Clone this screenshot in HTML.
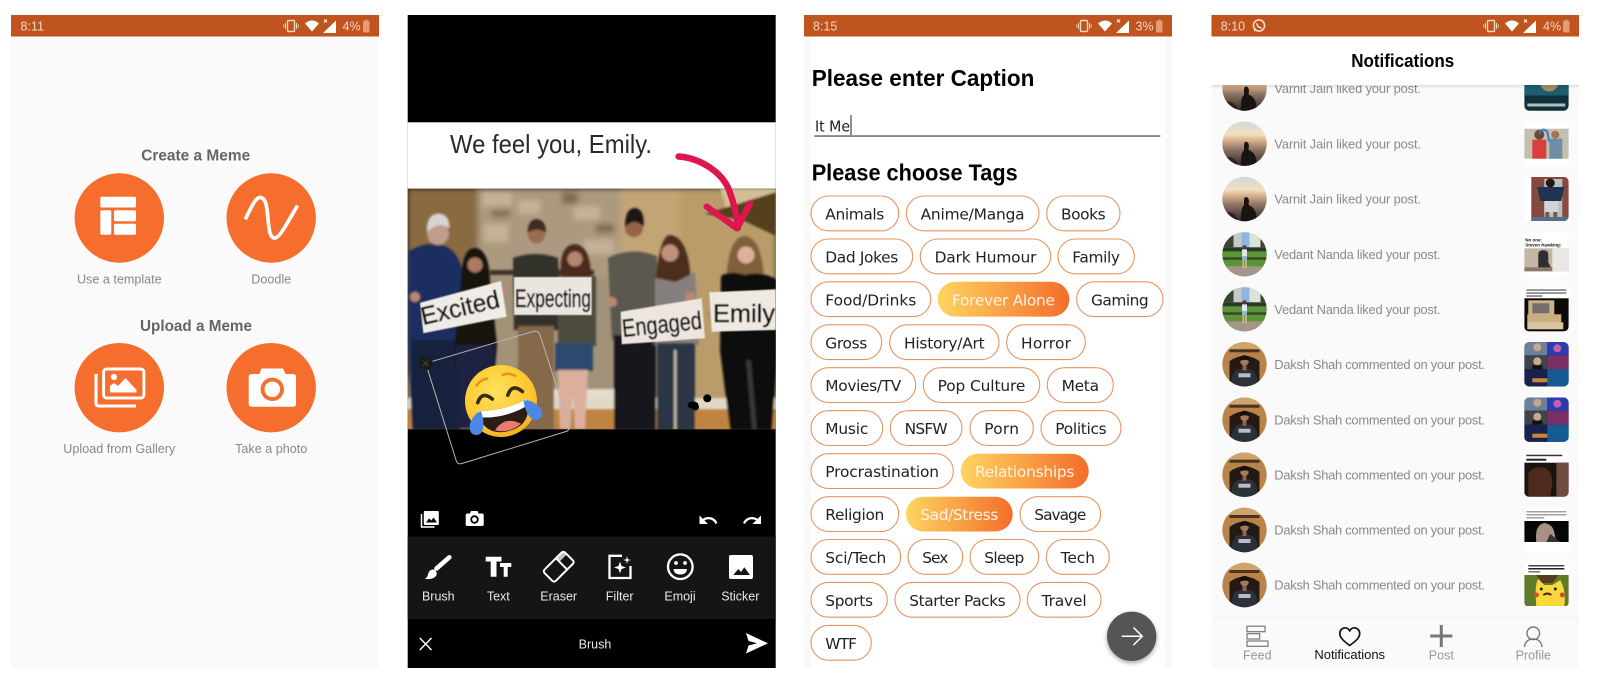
<!DOCTYPE html>
<html><head><meta charset="utf-8"><title>Meme app screens</title>
<style>
html,body{margin:0;padding:0;background:#fff;width:1600px;height:689px;overflow:hidden}
svg{position:absolute;left:0;top:0;display:block}
text{font-family:"Liberation Sans",sans-serif}
.st{font-size:12.5px;fill:#f1d6c6}
.h1{font-size:16px;font-weight:bold;fill:#666;text-anchor:middle}
.lb{font-size:12.6px;fill:#888;text-anchor:middle}
.tl{font-size:12.5px;fill:#e8e8e8;text-anchor:middle}
.hd{font-size:23.5px;font-weight:bold;fill:#000}
.c{fill:#fff;stroke:#e8935e;stroke-width:1.1}
.t{font-family:"DejaVu Sans",sans-serif;font-size:15.4px;fill:#222}
.w{font-family:"DejaVu Sans",sans-serif;font-size:15.4px;fill:#fff3e6}
.n{font-size:12.9px;fill:#8a8a8a}
.nv{font-size:12.5px;fill:#999;text-anchor:middle}
.sg{font-size:25px;fill:#17130f;stroke:#17130f;stroke-width:.5}
</style></head>
<body>
<svg width="1600" height="689" viewBox="0 0 1600 689" xmlns="http://www.w3.org/2000/svg">
<defs>
<linearGradient id="gr" x1="0" x2="1" y1="0" y2="0"><stop offset="0" stop-color="#fdd560"/><stop offset="1" stop-color="#f46d2b"/></linearGradient>
<linearGradient id="sky" x1="0" x2="0" y1="0" y2="1"><stop offset="0" stop-color="#cfd8dc"/><stop offset=".3" stop-color="#f2dfbc"/><stop offset=".45" stop-color="#d3a985"/><stop offset=".62" stop-color="#8e7464"/><stop offset="1" stop-color="#2a2222"/></linearGradient>
<linearGradient id="hsd" x1="0" x2="0" y1="0" y2="1"><stop offset="0" stop-color="#000" stop-opacity=".1"/><stop offset="1" stop-color="#000" stop-opacity="0"/></linearGradient>
<radialGradient id="face" cx=".45" cy=".35" r=".75"><stop offset="0" stop-color="#ffe25a"/><stop offset=".7" stop-color="#fcc42c"/><stop offset="1" stop-color="#f39a1e"/></radialGradient>
<filter id="b1" x="-5%" y="-5%" width="110%" height="110%"><feGaussianBlur stdDeviation="1.1"/></filter>
<filter id="b3" x="-5%" y="-5%" width="110%" height="110%"><feGaussianBlur stdDeviation="3"/></filter>
<filter id="b2"><feGaussianBlur stdDeviation=".45"/></filter>
<filter id="sh" x="-30%" y="-30%" width="160%" height="170%"><feDropShadow dx="0" dy="2" stdDeviation="2.5" flood-color="#000" flood-opacity=".35"/></filter>
<clipPath id="ph"><rect x="407.700" y="188.700" width="368" height="240.600"/></clipPath>
<clipPath id="av"><circle r="22.200"/></clipPath>
<clipPath id="th"><rect x="0" y="-22.200" width="44.300" height="44.400" rx="5"/></clipPath>
<clipPath id="lst"><rect x="1211" y="85" width="368" height="532"/></clipPath>

<g id="status">
<rect x="276.500" y="5.500" width="7" height="11" rx="1" fill="none" stroke="#f1d6c6" stroke-width="1.400"/>
<path d="M274.500 8v6M272.800 9.500v3M285.500 8v6M287.200 9.500v3" stroke="#f1d6c6" stroke-width="1"/>
<path d="M294 8.500Q301 2.500 308 8.500L301 16.500Z" fill="#fff"/>
<path d="M325 5.500V18H312Z" fill="#fff"/>
<path d="M313 4.500l3 3M316 4.500l-3 3" stroke="#fff" stroke-width=".9"/>
<rect x="352" y="6" width="6.500" height="11.500" rx="1" fill="#e59b78"/>
<rect x="353.800" y="4.800" width="3" height="1.500" fill="#e59b78"/>
</g>

<g id="a1"><g clip-path="url(#av)"><rect x="-23" y="-23" width="46" height="46" fill="url(#sky)"/>
<path d="M-23 14Q-10 10 -6 23H-23Z" fill="#1e1a1a" opacity=".8"/>
<path d="M-4 23L-3 11Q-2 7.500 -.5 6.500V2Q-.5 -2 1.500 -2Q4 -2 4.500 2L4 6Q9 8 11 13L13 23Z" fill="#191412"/></g></g>

<g id="a2"><g clip-path="url(#av)"><rect x="-23" y="-23" width="46" height="46" fill="#8fb6dc"/>
<rect x="-12" y="-22" width="9" height="15" fill="#c4c8c6"/><rect x="5" y="-21" width="11" height="16" fill="#e0e0da"/>
<path d="M-23 -22H-11V-7H-23ZM16 -20H24V-7H16Z" fill="#39452f"/>
<rect x="-23" y="-7" width="46" height="5" fill="#2b3823"/>
<rect x="-23" y="-3" width="46" height="16" fill="#5e9438"/><rect x="-23" y="3" width="46" height="2.500" fill="#26331b" opacity=".75"/>
<rect x="-23" y="12" width="46" height="12" fill="#a39588"/>
<rect x="-2.500" y="-5" width="5" height="7" fill="#dfe8ee"/><rect x="-2.500" y="2" width="5" height="4" fill="#8fb3c9"/><rect x="-2" y="6" width="1.700" height="8" fill="#d8b096"/><rect x=".5" y="6" width="1.700" height="8" fill="#d8b096"/><circle cy="-7" r="2" fill="#5a3d2c"/></g></g>

<g id="a3"><g clip-path="url(#av)"><rect x="-23" y="-23" width="46" height="46" fill="#b8844a"/>
<rect x="-23" y="-23" width="46" height="8" fill="#cfa46c"/>
<rect x="-15" y="-15" width="30" height="3" fill="#4a3420"/>
<path d="M-15 23V-3Q0 -14 15 -3V23Z" fill="#241a13"/>
<path d="M-14 23Q-13 7 -6 5H6Q13 7 14 23Z" fill="#2b3039"/>
<rect x="-6" y="9" width="12" height="4" fill="#b8bcc4"/>
<rect x="-2" y="1" width="4" height="5" fill="#8d654a"/>
<circle cy="-3" r="4.300" fill="#a4785a"/><path d="M-5 -3Q-5 -9 0 -9Q5 -9 5 -3Q1 -6 -5 -3Z" fill="#15100c"/></g></g>

<g id="th0"><g clip-path="url(#th)"><rect y="-23" width="45" height="46" fill="#0e3038"/><rect y="-23" width="45" height="30" fill="#1f6a7c" opacity=".8"/><circle cx="25" cy="-6" r="9" fill="#a48a62"/><rect x="3" y="15" width="38" height="3" fill="#aebfc2"/></g></g>
<g id="th1"><g clip-path="url(#th)"><rect y="-23" width="45" height="46" fill="#fff"/><rect y="-15" width="45" height="30" fill="#c3c0ae"/><rect x="8" y="-4" width="14" height="19" fill="#d8403c"/><circle cx="15" cy="-9" r="5" fill="#6d4a35"/><path d="M15 -10Q18 -17 23 -12L25 -2" stroke="#3a78c8" stroke-width="2" fill="none"/><rect x="25" y="-5" width="13" height="20" fill="#6e8ea8"/><circle cx="31" cy="-9" r="4" fill="#a17553"/></g></g>
<g id="th2"><g clip-path="url(#th)"><rect y="-23" width="45" height="46" fill="#fff"/><rect x="7" y="-22" width="38" height="44" fill="#86493f"/><rect x="20" y="-20" width="18" height="38" fill="#b9c0bd"/><path d="M13 -12H40L37 2H16Z" fill="#1f3354"/><circle cx="26" cy="-16" r="4.500" fill="#231715"/><rect x="20" y="2" width="14" height="12" fill="#d2d2d8"/><rect x="21" y="13" width="4" height="6" fill="#7a584a"/><rect x="29" y="13" width="4" height="6" fill="#7a584a"/><rect x="7" y="18" width="38" height="4" fill="#5a6d8a"/></g></g>
<g id="th3"><g clip-path="url(#th)"><rect y="-23" width="45" height="46" fill="#fff"/><text x="1" y="-13" font-size="4.500" font-weight="bold" fill="#111">No one:</text><text x="1" y="-8" font-size="4.500" font-weight="bold" fill="#111">Steven Hawking:</text><rect y="-6" width="45" height="23" fill="#c5b6a4"/><rect x="28" y="-6" width="17" height="23" fill="#e8e7e3"/><path d="M14 12V0Q14 -4 19 -4T24 0V8L27 14H14Z" fill="#2c2f33"/><rect y="13" width="28" height="4" fill="#8a7a68"/></g></g>
<g id="th4"><g clip-path="url(#th)"><rect y="-23" width="45" height="46" fill="#fff"/><rect x="2" y="-20" width="40" height="1.500" fill="#777"/><rect x="2" y="-17" width="40" height="1.500" fill="#777"/><rect x="2" y="-14" width="16" height="1.500" fill="#777"/><rect y="-11" width="45" height="33" fill="#0b0a08"/><rect x="4" y="-9" width="26" height="15" fill="#c9b188"/><rect x="8" y="-6" width="17" height="10" fill="#71706a"/><rect x="3" y="5" width="34" height="9" fill="#c9ae82"/><rect x="3" y="13" width="36" height="7" fill="#d9c6a0"/></g></g>
<g id="th5"><g clip-path="url(#th)"><rect y="-23" width="45" height="46" fill="#16203a"/><rect y="-23" width="23" height="14" fill="#6c8098"/><circle cx="13" cy="-17" r="4" fill="#c7a68e"/><rect x="23" y="-23" width="22" height="14" fill="#2a3cae"/><circle cx="33" cy="-16" r="4" fill="#c060b0"/><rect y="-9" width="23" height="14" fill="#3f434b"/><circle cx="13" cy="-3" r="4" fill="#caa88e"/><rect x="8" y="1" width="10" height="4" fill="#111"/><rect x="23" y="-9" width="22" height="14" fill="#7a2f66"/><rect y="5" width="23" height="17" fill="#18224e"/><rect x="8" y="14" width="16" height="4" fill="#c8873c"/><rect x="23" y="5" width="22" height="17" fill="#155a92"/></g></g>
<g id="th6"><g clip-path="url(#th)"><rect y="-23" width="45" height="46" fill="#fff"/><rect x="2" y="-20" width="36" height="1.500" fill="#333"/><rect x="2" y="-16" width="20" height="2" fill="#222"/><rect y="-12" width="45" height="34" fill="#1a1310"/><path d="M4 22V-2Q10 -9 20 -7Q28 -4 28 8L26 22Z" fill="#4d2a1c"/><rect x="32" y="-12" width="13" height="34" fill="#6e4c3e"/></g></g>
<g id="th7"><g clip-path="url(#th)"><rect y="-23" width="45" height="46" fill="#fff"/><rect x="2" y="-19" width="40" height="1.500" fill="#a0a0a0"/><rect x="2" y="-16" width="40" height="1.500" fill="#a0a0a0"/><rect x="2" y="-13" width="18" height="1.500" fill="#a0a0a0"/><rect y="-9" width="45" height="21" fill="#060606"/><path d="M12 12Q10 -5 20 -7Q28 -6 30 2L32 12Z" fill="#a89082"/><path d="M22 12L26 4L36 12Z" fill="#333"/></g></g>
<g id="th8"><g clip-path="url(#th)"><rect y="-23" width="45" height="46" fill="#fff"/><rect x="4" y="-20" width="36" height="1.500" fill="#444"/><rect x="4" y="-17" width="36" height="1.500" fill="#222"/><rect x="4" y="-14" width="12" height="1.500" fill="#777"/><rect y="-10" width="45" height="31" fill="#5e7a2a"/><path d="M12 -10H34L28 -2H18Z" fill="#5a3a1e"/><path d="M12 21Q10 -1 14 -6L20 0H28L36 -5Q42 6 40 21Z" fill="#f7d83a"/><path d="M19 10q4 -3 8 0" stroke="#40220e" stroke-width="2" fill="none"/><circle cx="17" cy="4" r="1.500" fill="#222"/><circle cx="31" cy="4" r="1.500" fill="#222"/><circle cx="12" cy="10" r="2.500" fill="#d64a30"/><circle cx="38" cy="10" r="2.500" fill="#d64a30"/></g></g>
</defs>

<!-- PANEL 1 -->
<rect x="11" y="15" width="368" height="653" fill="#fafafa"/>
<rect x="11" y="15" width="368" height="21.500" fill="#c0541f"/>
<text class="st" x="20.500" y="30.500">8:11</text>
<use href="#status" transform="translate(11,15)"/>
<text class="st" x="342.500" y="30.500">4%</text>

<text class="h1" x="195.700" y="160.500" textLength="109" lengthAdjust="spacingAndGlyphs">Create a Meme</text>
<circle cx="119.300" cy="218" r="44.700" fill="#f56e2d"/>
<circle cx="271.200" cy="218" r="44.700" fill="#f56e2d"/>
<g fill="#fff">
<rect x="100.300" y="196.700" width="35.700" height="10.800" rx="1.500"/>
<rect x="100.300" y="210.300" width="11" height="24.400" rx="1.500"/>
<rect x="114" y="210.300" width="22" height="11" rx="1.500"/>
<rect x="114" y="223.700" width="22" height="11" rx="1.500"/>
</g>
<path d="M245.300 219.300C250 210 255 197.500 260 197.500C266 197.500 267 207 268 219C269 230 270 238 274.500 238C279 238 284 229 297.500 205.500" fill="none" stroke="#fff" stroke-width="3.700"/>
<text class="lb" x="119.300" y="283.500">Use a template</text>
<text class="lb" x="271.200" y="283.500">Doodle</text>

<text class="h1" x="196" y="331" textLength="112" lengthAdjust="spacingAndGlyphs">Upload a Meme</text>
<circle cx="119.300" cy="387.700" r="44.700" fill="#f56e2d"/>
<circle cx="271.200" cy="387.700" r="44.700" fill="#f56e2d"/>
<rect x="103.600" y="369" width="40.300" height="29" rx="3" fill="none" stroke="#fff" stroke-width="2.900"/>
<circle cx="114" cy="377" r="3.100" fill="#fff"/>
<path d="M110 392.500V386L114 383L118 386L125.500 378L136.500 390V392.500Z" fill="#fff"/>
<path d="M96 374V403Q96 406 99 406H136" fill="none" stroke="#fff" stroke-width="3.100"/>
<path d="M248.700 377Q248.700 374 251.700 374H259.500L261.500 368.500H283L285.500 374H293Q296 374 296 377V404Q296 406.700 293 406.700H251.700Q248.700 406.700 248.700 404Z" fill="#fff"/>
<circle cx="272.300" cy="389.300" r="11.700" fill="#f56e2d"/>
<circle cx="272.300" cy="389.300" r="7.800" fill="#fff"/>
<text class="lb" x="119.300" y="453">Upload from Gallery</text>
<text class="lb" x="271.200" y="453">Take a photo</text>

<!-- PANEL 2 -->
<rect x="407.700" y="15" width="368" height="653" fill="#000"/>
<rect x="407.700" y="122.300" width="368" height="66.400" fill="#fff"/>
<text x="450" y="153" font-size="26" fill="#2a2a2a" textLength="202" lengthAdjust="spacingAndGlyphs">We feel you, Emily.</text>

<g clip-path="url(#ph)">
<g filter="url(#b3)">
<rect x="407" y="188" width="370" height="242" fill="#b99c6b"/>
<rect x="407" y="188" width="72" height="190" fill="#8a6a3f"/>
<rect x="478" y="188" width="142" height="92" fill="#ac9a80"/>
<rect x="488" y="278" width="132" height="125" fill="#a29278"/>
<rect x="620" y="188" width="60" height="100" fill="#c2a574"/>
<g fill="#c4b396"><rect x="482" y="192" width="30" height="14"/><rect x="518" y="200" width="22" height="14"/><rect x="574" y="206" width="26" height="14"/><rect x="484" y="224" width="24" height="18"/><rect x="584" y="240" width="30" height="14"/></g>
<g fill="#7d6a52"><rect x="562" y="192" width="16" height="12"/><rect x="492" y="210" width="18" height="7"/><rect x="596" y="224" width="18" height="9"/></g>
</g>
<g filter="url(#b1)">
<rect x="490" y="270" width="104" height="5" fill="#3d3026"/>
<path d="M720 189H776V200L728 214Z" fill="#d2bd95"/>
<path d="M705 214L776 192V236L742 220Z" fill="#54401f"/>
<rect x="552" y="389" width="66" height="14" fill="#e4dccd"/>
<rect x="407" y="398" width="370" height="11" fill="#e2d8c7"/>
<rect x="407" y="409" width="370" height="21" fill="#c08443"/>
<!-- person 1 -->
<path d="M408 252Q425 240 445 246Q460 252 464 278L470 345V429H412L408 340Z" fill="#1f2f5e"/>
<rect x="412" y="340" width="48" height="90" fill="#15203e"/>
<circle cx="438" cy="234" r="11" fill="#c09d8c"/><path d="M427 232Q426 214 438.500 213.500Q450 214 449.500 229Q440 220 427 232Z" fill="#d6d4d0"/>
<!-- person 2 -->
<path d="M461 280Q462 248 475 248Q489 249 490 280L497 345L490 429H456L455 340Z" fill="#19120f"/>
<circle cx="475" cy="265" r="7.500" fill="#ac7a62"/>
<rect x="456" y="345" width="38" height="84" fill="#1a2440"/>
<!-- person 3 -->
<path d="M513 258Q535 250 558 258L562 330H514Z" fill="#33312c"/>
<rect x="518" y="326" width="36" height="104" fill="#84694c"/>
<circle cx="536.500" cy="235" r="8.500" fill="#9a6c50"/><path d="M527.500 233Q528 219 537 219Q546 220 546 233Q537 226 527.500 233Z" fill="#3c2a20"/>
<!-- person 4 -->
<path d="M561 278Q558 245 575 244Q591 246 591 278Z" fill="#4b2a1e"/>
<rect x="558" y="276" width="38" height="70" fill="#4d4c3c"/>
<rect x="555" y="343" width="38" height="28" fill="#2f4a70"/>
<path d="M558 370H588L585 429H575L573 395L570 429H560Z" fill="#dcaf9c"/>
<circle cx="575" cy="259" r="7.500" fill="#b58670"/>
<!-- person 5 -->
<path d="M608 258Q630 246 657 256L660 340H612Z" fill="#5a5850"/>
<rect x="614" y="335" width="42" height="95" fill="#14141a"/>
<circle cx="634" cy="228" r="9" fill="#966349"/><path d="M625 227Q625 208 635 208Q645 209 643.500 227Q635 217 625 227Z" fill="#1e1613"/>
<!-- person 6 -->
<path d="M656 278Q660 235 670 235Q686 236 690 270L696 345H652Z" fill="#4d2d1f"/>
<path d="M655 278L676 282L695 272L699 345H655Z" fill="#85807e"/>
<rect x="657" y="343" width="38" height="87" fill="#2b3644"/>
<rect x="674" y="350" width="2.500" height="80" fill="#c4b9a4"/>
<circle cx="670" cy="253" r="8.500" fill="#c0927e"/>
<!-- Emily -->
<path d="M726 284Q728 236 745 236Q762 238 764 280Z" fill="#80603a"/>
<path d="M721 276Q730 270 745 275Q760 270 778 280V350L772 430H730L720 350Z" fill="#0c0b0c"/>
<path d="M746 360L752 430H757L751 360Z" fill="#3a3636"/>
<circle cx="746" cy="255" r="8.500" fill="#e0b098"/>
<!-- hands -->
<g fill="#b98a72"><circle cx="415" cy="297" r="5"/><circle cx="502" cy="291" r="4.500"/><circle cx="612" cy="302" r="5"/><circle cx="690" cy="297" r="5"/><circle cx="710" cy="315" r="3.500"/></g>
</g>

<g filter="url(#b2)">
<polygon points="420,302.700 501,281 506.700,316.700 423.300,333.300" fill="#efebe6"/>
<polygon points="514,277 591.700,277 591.700,315 514,315" fill="#ebe5e0"/>
<polygon points="620.700,311.700 701.700,298.300 705,338.300 621.700,344.300" fill="#ece6df"/>
<polygon points="709.300,292.300 776,289.300 776,330 711.700,331.700" fill="#efe9e2"/>
<text class="sg" transform="translate(423,325) rotate(-13)" textLength="80" lengthAdjust="spacingAndGlyphs">Excited</text>
<text class="sg" x="515" y="307" textLength="76" lengthAdjust="spacingAndGlyphs">Expecting</text>
<text class="sg" transform="translate(623,337) rotate(-6)" textLength="80" lengthAdjust="spacingAndGlyphs">Engaged</text>
<text class="sg" x="713" y="322" textLength="62" lengthAdjust="spacingAndGlyphs">Emily</text>
</g>
</g>

<path d="M678.500 156.500C700 158 722 172 729 190C733 201 737 215 738 228M706.700 206.700L737 228.300L750 203.500" fill="none" stroke="#dd1650" stroke-width="6.400" stroke-linecap="round" stroke-linejoin="round"/>

<!-- drawing dots -->
<circle cx="707.300" cy="398.300" r="4" fill="#000"/>
<ellipse cx="693" cy="405" rx="5.500" ry="3.500" fill="#000"/>
<circle cx="695.500" cy="407" r="3.500" fill="#000"/>

<!-- sticker box -->
<path d="M425.700 363.300L533 331.500Q538.300 330 540 335L569 425Q570.500 430 566 431.500L462 463.500Q457.500 465 456 460L425.700 363.300Z" fill="none" stroke="#b5b5b5" stroke-width="1"/>
<circle cx="425.700" cy="363.300" r="7" fill="#1a1a1a"/>
<path d="M423 360.600l5.400 5.400M428.400 360.600l-5.400 5.400" stroke="#444" stroke-width="1"/>

<!-- emoji -->
<g transform="translate(501,401) rotate(-14)">
<circle r="36" fill="url(#face)"/>
<path d="M-20 -21q6 -5 12 -4M8 -25q6 -1 12 4" stroke="#e8941f" stroke-width="2.600" fill="none" stroke-linecap="round"/>
<path d="M-23 -4q7 -11 15 0M8 -4q7 -11 15 0" stroke="#3a2a20" stroke-width="3.600" fill="none" stroke-linecap="round"/>
<path d="M-26 4Q0 11 26 4Q25 31 0 31Q-25 31 -26 4Z" fill="#2b1c16"/>
<path d="M-26 4Q0 11 26 4L24 11Q0 18 -24 11Z" fill="#fff"/>
<path d="M-13 27Q0 15 14 27Q0 34 -13 27Z" fill="#ea7a6c"/>
<path d="M-22 5C-30 6 -38 14 -37 22C-36 28 -28 29 -25 24C-22 19 -21 12 -22 5Z" fill="#4a88e4"/>
<path d="M22 5C30 6 38 14 37 22C36 28 28 29 25 24C22 19 21 12 22 5Z" fill="#4a88e4"/>
</g>

<!-- small top tools -->
<rect x="423.800" y="511" width="15" height="14" rx="1" fill="#fff"/>
<path d="M426 522.500l3 -4 2.500 2 2 -3 3.500 5z" fill="#000"/>
<path d="M421.500 514v13h13" fill="none" stroke="#fff" stroke-width="1.500"/>
<path d="M465.700 515Q465.700 513.500 467.500 513.500H470L471 511H477.500L478.500 513.500H482Q483.700 513.500 483.700 515V524.500Q483.700 526 482 526H467.500Q465.700 526 465.700 524.500Z" fill="#fff"/>
<circle cx="474.500" cy="519.500" r="3.300" fill="#fff" stroke="#000" stroke-width="1.800"/>
<path d="M716.500 523.500C714 518 708 516.500 703 520" fill="none" stroke="#fff" stroke-width="2.200"/>
<path d="M699.500 515.500V524H708Z" fill="#fff"/>
<path d="M744 523.500C746.500 518 752.500 516.500 757.500 520" fill="none" stroke="#fff" stroke-width="2.200"/>
<path d="M761 515.500V524H752.500Z" fill="#fff"/>

<!-- toolbar -->
<rect x="407.700" y="536.700" width="368" height="82.300" fill="#151515"/>
<path d="M449.300 557.300L436.500 568.500" stroke="#fff" stroke-width="4.600" stroke-linecap="round"/>
<path d="M434 569.500C430 569 428.500 572 428 574.500C427.500 577 426 578 424.800 578.500C429 580 434 578.500 436 576C437.500 573.500 436.500 570.500 434 569.500Z" fill="#fff"/>
<path d="M485.700 556.700H501.500V561.500H496.500V576.700H490.700V561.500H485.700ZM500 563H511.300V567H507.700V576.700H503.700V567H500Z" fill="#fff"/>
<g transform="translate(558.700,566.700) rotate(-45)"><rect x="-14.500" y="-8" width="29" height="16" rx="2.500" fill="none" stroke="#fff" stroke-width="2"/><path d="M4 -8V8" stroke="#fff" stroke-width="2"/><rect x="4" y="-8" width="10" height="5" fill="#fff" opacity=".75"/></g>
<path d="M622 555.800H609.500V578H630.500V566" fill="none" stroke="#fff" stroke-width="2.300"/>
<path d="M620 561.500L621.500 566L626 567.500L621.500 569L620 573.500L618.500 569L614 567.500L618.500 566Z" fill="#fff"/>
<path d="M627 556L627.800 559.200L631 560L627.800 560.800L627 564L626.200 560.800L623 560L626.200 559.200Z" fill="#fff"/>
<circle cx="680.300" cy="566.700" r="12.300" fill="none" stroke="#fff" stroke-width="2.300"/>
<circle cx="676" cy="563" r="1.900" fill="#fff"/><circle cx="685" cy="563" r="1.900" fill="#fff"/>
<path d="M673.500 569H687Q686.500 574.500 680.300 574.500Q674 574.500 673.500 569Z" fill="#fff"/>
<rect x="729" y="555" width="24" height="24" rx="2" fill="#fff"/>
<path d="M733.300 575L738.300 569L741 572L744.300 567.300L750 575Z" fill="#151515"/>
<g>
<text class="tl" x="438.300" y="600.500">Brush</text>
<text class="tl" x="498.300" y="600.500">Text</text>
<text class="tl" x="558.700" y="600.500">Eraser</text>
<text class="tl" x="619.700" y="600.500">Filter</text>
<text class="tl" x="680" y="600.500">Emoji</text>
<text class="tl" x="740.300" y="600.500">Sticker</text>
</g>
<path d="M419.800 638L431.500 650M431.500 638L419.800 650" stroke="#f2f2f2" stroke-width="1.600"/>
<text class="tl" x="595" y="648.500">Brush</text>
<path d="M746 633L768 643.300L746 653.500L748.500 645.500L757 643.300L748.500 641Z" fill="#fff"/>

<!-- PANEL 3 -->
<rect x="804" y="15" width="368" height="653" fill="#f9f9f9"/>
<rect x="811" y="36" width="354" height="632" fill="#fff"/>
<rect x="804" y="15" width="368" height="21.500" fill="#c0541f"/>
<text class="st" x="813" y="30.500">8:15</text>
<use href="#status" transform="translate(804,15)"/>
<text class="st" x="1135.500" y="30.500">3%</text>

<text class="hd" x="811.700" y="86" textLength="222.700" lengthAdjust="spacingAndGlyphs">Please enter Caption</text>
<text class="t" x="815" y="131.500" textLength="35" lengthAdjust="spacingAndGlyphs">It Me</text>
<rect x="850.500" y="115" width="1" height="20" fill="#222"/>
<rect x="814.300" y="135.300" width="346" height="1.500" fill="#666"/>
<text class="hd" x="811.700" y="180.700" textLength="206" lengthAdjust="spacingAndGlyphs">Please choose Tags</text>

<g>
<rect class="c" x="811" y="196" width="87.700" height="34.800" rx="17.400"/><text class="t" x="825.300" y="219.500" textLength="59">Animals</text>
<rect class="c" x="906.300" y="196" width="132.700" height="34.800" rx="17.400"/><text class="t" x="920.600" y="219.500" textLength="104">Anime/Manga</text>
<rect class="c" x="1046.700" y="196" width="73.300" height="34.800" rx="17.400"/><text class="t" x="1061" y="219.500" textLength="44.700">Books</text>

<rect class="c" x="811" y="239" width="101.700" height="34.800" rx="17.400"/><text class="t" x="825.300" y="262.500" textLength="73">Dad Jokes</text>
<rect class="c" x="920.300" y="239" width="130.400" height="34.800" rx="17.400"/><text class="t" x="934.600" y="262.500" textLength="101.800">Dark Humour</text>
<rect class="c" x="1058" y="239" width="76.300" height="34.800" rx="17.400"/><text class="t" x="1072.300" y="262.500" textLength="47.700">Family</text>

<rect class="c" x="811" y="281.800" width="119.700" height="34.800" rx="17.400"/><text class="t" x="825.300" y="305.300" textLength="91">Food/Drinks</text>
<rect fill="url(#gr)" x="937.700" y="281.800" width="131.600" height="34.800" rx="17.400"/><text class="w" x="952" y="305.300" textLength="103">Forever Alone</text>
<rect class="c" x="1076.700" y="281.800" width="86.300" height="34.800" rx="17.400"/><text class="t" x="1091" y="305.300" textLength="57.700">Gaming</text>

<rect class="c" x="811" y="324.800" width="70.700" height="34.800" rx="17.400"/><text class="t" x="825.300" y="348.300" textLength="42">Gross</text>
<rect class="c" x="889.700" y="324.800" width="109.300" height="34.800" rx="17.400"/><text class="t" x="904" y="348.300" textLength="80.700">History/Art</text>
<rect class="c" x="1006.700" y="324.800" width="78.600" height="34.800" rx="17.400"/><text class="t" x="1021" y="348.300" textLength="50">Horror</text>

<rect class="c" x="811" y="367.700" width="104.700" height="34.800" rx="17.400"/><text class="t" x="825.300" y="391.200" textLength="76">Movies/TV</text>
<rect class="c" x="923.300" y="367.700" width="116.400" height="34.800" rx="17.400"/><text class="t" x="937.600" y="391.200" textLength="87.800">Pop Culture</text>
<rect class="c" x="1047.300" y="367.700" width="66" height="34.800" rx="17.400"/><text class="t" x="1061.600" y="391.200" textLength="37.400">Meta</text>

<rect class="c" x="811" y="410.700" width="71.700" height="34.800" rx="17.400"/><text class="t" x="825.300" y="434.200" textLength="43">Music</text>
<rect class="c" x="890.300" y="410.700" width="71.700" height="34.800" rx="17.400"/><text class="t" x="904.600" y="434.200" textLength="43">NSFW</text>
<rect class="c" x="970" y="410.700" width="63.300" height="34.800" rx="17.400"/><text class="t" x="984.300" y="434.200" textLength="34.700">Porn</text>
<rect class="c" x="1041" y="410.700" width="80" height="34.800" rx="17.400"/><text class="t" x="1055.300" y="434.200" textLength="51.400">Politics</text>

<rect class="c" x="811" y="453.700" width="142.300" height="34.800" rx="17.400"/><text class="t" x="825.300" y="477.200" textLength="113.700">Procrastination</text>
<rect fill="url(#gr)" x="960.700" y="453.700" width="128" height="34.800" rx="17.400"/><text class="w" x="975" y="477.200" textLength="99.400">Relationships</text>

<rect class="c" x="811" y="496.700" width="87.700" height="34.800" rx="17.400"/><text class="t" x="825.300" y="520.200" textLength="59">Religion</text>
<rect fill="url(#gr)" x="906" y="496.700" width="106.700" height="34.800" rx="17.400"/><text class="w" x="920.300" y="520.200" textLength="78">Sad/Stress</text>
<rect class="c" x="1020" y="496.700" width="80.700" height="34.800" rx="17.400"/><text class="t" x="1034.300" y="520.200" textLength="52">Savage</text>

<rect class="c" x="811" y="539.500" width="89.700" height="34.800" rx="17.400"/><text class="t" x="825.300" y="563" textLength="61">Sci/Tech</text>
<rect class="c" x="908" y="539.500" width="54.700" height="34.800" rx="17.400"/><text class="t" x="922.300" y="563" textLength="26">Sex</text>
<rect class="c" x="970" y="539.500" width="68.700" height="34.800" rx="17.400"/><text class="t" x="984.300" y="563" textLength="40">Sleep</text>
<rect class="c" x="1046.300" y="539.500" width="63" height="34.800" rx="17.400"/><text class="t" x="1060.600" y="563" textLength="34.400">Tech</text>

<rect class="c" x="811" y="582.400" width="76.300" height="34.800" rx="17.400"/><text class="t" x="825.300" y="605.900" textLength="47.700">Sports</text>
<rect class="c" x="895" y="582.400" width="125" height="34.800" rx="17.400"/><text class="t" x="909.300" y="605.900" textLength="96.400">Starter Packs</text>
<rect class="c" x="1027.300" y="582.400" width="73.700" height="34.800" rx="17.400"/><text class="t" x="1041.600" y="605.900" textLength="45">Travel</text>

<rect class="c" x="811" y="625.400" width="60.300" height="34.800" rx="17.400"/><text class="t" x="825.300" y="648.900" textLength="31.700">WTF</text>
</g>
<circle cx="1131.700" cy="636.300" r="24.700" fill="#555" filter="url(#sh)"/>
<path d="M1121.700 636.300H1142M1133.500 627.500L1142.300 636.300L1133.500 645" fill="none" stroke="#fff" stroke-width="1.500"/>

<!-- PANEL 4 -->
<rect x="1211.500" y="15" width="367.500" height="653" fill="#fafafa"/>
<g clip-path="url(#lst)">
<g>
<use href="#a1" x="1244.500" y="88.500"/><text class="n" x="1274.300" y="93" textLength="146.700">Varnit Jain liked your post.</text><use href="#th0" x="1524.300" y="88.500"/>
<use href="#a1" x="1244.500" y="143.700"/><text class="n" x="1274.300" y="148.300" textLength="146.700">Varnit Jain liked your post.</text><use href="#th1" x="1524.300" y="143.700"/>
<use href="#a1" x="1244.500" y="199"/><text class="n" x="1274.300" y="203.500" textLength="146.700">Varnit Jain liked your post.</text><use href="#th2" x="1524.300" y="199"/>
<use href="#a2" x="1244.500" y="254.300"/><text class="n" x="1274.300" y="258.800" textLength="166.300">Vedant Nanda liked your post.</text><use href="#th3" x="1524.300" y="254.300"/>
<use href="#a2" x="1244.500" y="309.300"/><text class="n" x="1274.300" y="314" textLength="166.300">Vedant Nanda liked your post.</text><use href="#th4" x="1524.300" y="309.300"/>
<use href="#a3" x="1244.500" y="364.300"/><text class="n" x="1274.300" y="369" textLength="210.700">Daksh Shah commented on your post.</text><use href="#th5" x="1524.300" y="364.300"/>
<use href="#a3" x="1244.500" y="419.700"/><text class="n" x="1274.300" y="424.300" textLength="210.700">Daksh Shah commented on your post.</text><use href="#th5" x="1524.300" y="419.700"/>
<use href="#a3" x="1244.500" y="474.700"/><text class="n" x="1274.300" y="479.300" textLength="210.700">Daksh Shah commented on your post.</text><use href="#th6" x="1524.300" y="474.700"/>
<use href="#a3" x="1244.500" y="530"/><text class="n" x="1274.300" y="534.500" textLength="210.700">Daksh Shah commented on your post.</text><use href="#th7" x="1524.300" y="530"/>
<use href="#a3" x="1244.500" y="585"/><text class="n" x="1274.300" y="589.700" textLength="210.700">Daksh Shah commented on your post.</text><use href="#th8" x="1524.300" y="585"/>
</g>
</g>
<rect x="1211.500" y="85" width="367.500" height="4" fill="url(#hsd)"/>
<rect x="1211.500" y="36" width="367.500" height="49" fill="#fff"/>
<rect x="1211.500" y="15" width="367.500" height="21.500" fill="#c0541f"/>
<text class="st" x="1220.700" y="30.500">8:10</text>
<circle cx="1259" cy="25.500" r="5.600" fill="none" stroke="#f6e2d6" stroke-width="1.500"/>
<path d="M1253.800 31.500L1254.700 27.500L1257 30.300Z" fill="#f6e2d6"/>
<path d="M1256.800 23.300Q1257.300 27.500 1261.500 28" fill="none" stroke="#f6e2d6" stroke-width="1.500"/>
<use href="#status" transform="translate(1211,15)"/>
<text class="st" x="1543" y="30.500">4%</text>
<text x="1402.700" y="67" font-size="18" font-weight="bold" fill="#000" text-anchor="middle" textLength="103" lengthAdjust="spacingAndGlyphs">Notifications</text>

<rect x="1211.500" y="617.300" width="367.500" height="50.700" fill="#fafafa"/>
<rect x="1211.500" y="617" width="367.500" height="1" fill="#f0f0f0"/>
<g fill="none" stroke="#777" stroke-width="1.200">
<rect x="1247" y="626.200" width="18" height="5.500"/>
<rect x="1247" y="633.700" width="12.700" height="5.300"/>
<rect x="1247" y="641" width="21" height="5.300"/>
</g>
<text class="nv" x="1257.300" y="659.300">Feed</text>
<path d="M1349.700 645.500C1343 640.500 1339.800 637.500 1339.800 633.500C1339.800 630 1342.500 627.800 1345 627.800C1347 627.800 1348.700 629 1349.700 630.800C1350.700 629 1352.400 627.800 1354.400 627.800C1357 627.800 1359.700 630 1359.700 633.500C1359.700 637.500 1356.500 640.500 1349.700 645.500Z" fill="none" stroke="#111" stroke-width="1.700"/>
<text x="1349.700" y="659" font-size="13" fill="#111" text-anchor="middle" textLength="70.700">Notifications</text>
<path d="M1430.300 636H1452.300M1441.300 625V647" stroke="#777" stroke-width="3"/>
<text class="nv" x="1441.300" y="659.300">Post</text>
<circle cx="1533.300" cy="633.300" r="6.300" fill="none" stroke="#777" stroke-width="1.400"/>
<path d="M1524.500 647C1525 641 1529 639 1533.300 639C1537.500 639 1541.500 641 1542 647" fill="none" stroke="#777" stroke-width="1.400"/>
<text class="nv" x="1533.300" y="659.300">Profile</text>
</svg>
</body></html>
